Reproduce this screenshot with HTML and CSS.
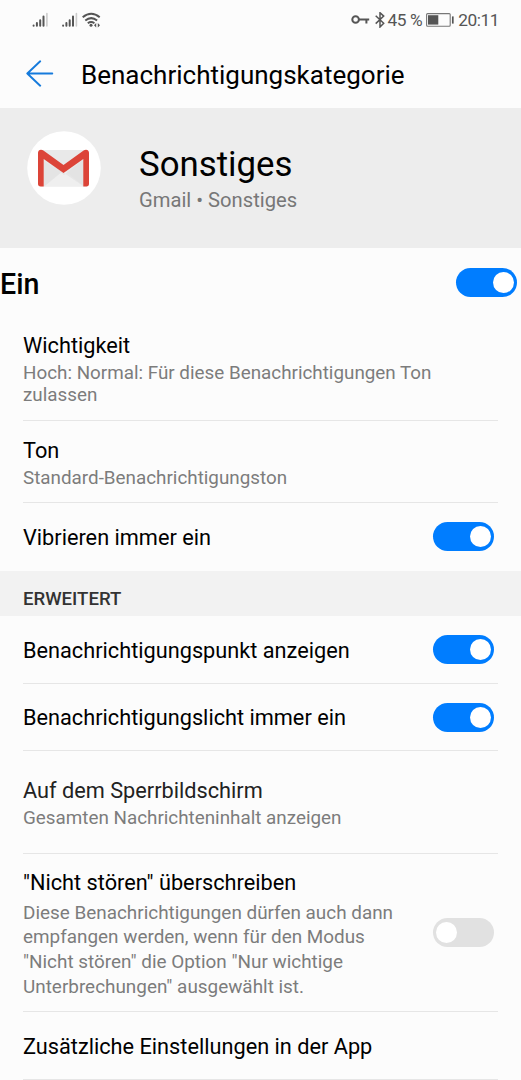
FILE: index.html
```html
<!DOCTYPE html>
<html lang="de">
<head>
<meta charset="utf-8">
<title>Benachrichtigungskategorie</title>
<link rel="stylesheet" href="styles.css">
</head>
<body>
<div class="statusbar">
  <svg class="signals" width="70" height="18" viewBox="0 0 70 18">
    <g stroke="#555" stroke-width="2" stroke-linecap="round"><path d="M2.600 14.400v.4M5.900 12v2.800M9.200 9.200v5.600M12.500 5.600v9.200M32.100 14.400v.4M35.400 12v2.800M38.700 9.200v5.600M42 5.600v9.200"/><path d="M15.900 2.500v12.500M45.400 2.500v12.500" stroke="#ccc" stroke-width="1.600"/></g>
    <g fill="none" stroke="#555" stroke-width="2"><path d="M51.700 6.300q8.500-7 17 0M54.300 9.500q5.900-4.800 11.800 0M56.800 12.200q3.300-2.500 6.600 0"/></g>
    <circle cx="60" cy="14.300" r="1.500" fill="#555"/><path d="M63 14.300l2.200-2.200v4.400zM69 14.300l-2.200-2.200v4.400z" fill="#555"/>
  </svg>
  <div class="status-right">
    <svg width="19" height="12" viewBox="0 0 19 12" fill="none" stroke="#555" stroke-width="2"><circle cx="4.600" cy="5.500" r="3.300"/><path d="M8 5.500h10.200M15.400 5.500v4"/></svg>
    <svg class="bt" width="10" height="16" viewBox="0 0 10 16" fill="none" stroke="#555" stroke-width="1.500"><path d="M.7 3.800l8 7.500L5 15V.7l3.700 3.400-8 7.500"/></svg>
    <span class="percent">45 %</span>
    <svg class="battery" width="28" height="14" viewBox="0 0 28 14"><rect x=".6" y=".6" width="23.600" height="12.600" rx="1" fill="none" stroke="#777" stroke-width="1.100"/><path d="M2 2.200h10.300v9.400H2z" fill="#555"/><path d="M26.800 3.400v7.200" stroke="#555" stroke-width="1.700"/></svg>
    <span class="clock">20:11</span>
  </div>
</div>
<header class="appbar">
  <svg width="28" height="28" viewBox="0 0 28 28" fill="none" stroke="#167bdc" stroke-width="1.900" stroke-linecap="round" stroke-linejoin="round"><path d="M26.300 13.500H1.300M14.200 1.300L1.300 13.500l12.900 12.200"/></svg>
  <h1 class="appbar-title">Benachrichtigungskategorie</h1>
</header>
<section class="hero">
  <svg class="logo" width="74" height="74" viewBox="0 0 74 74">
    <circle cx="37" cy="37" r="36.800" fill="#fff"/>
    <path d="M14 19h46v36.500H14z" fill="#e9e9e9"/>
    <path d="M17 55.500L37 39l20 16.500z" fill="#efefef"/>
    <path d="M17 30v25.500L34 41.500z" fill="#e4e4e4"/>
    <path d="M17 28l20 16 20-16v27.500L37 42z" fill="#dedede" opacity=".5"/>
    <path d="M11 21.700a3.200 3.200 0 0 1 3-2.900q1.300 0 2.400.8L36.500 34l20.100-14.400q1.100-.8 2.400-.8a3.200 3.200 0 0 1 3 2.900v31.100a2.600 2.600 0 0 1-2.600 2.600H56.300V28L36.500 42 16.700 28v27.400h-3.100a2.600 2.600 0 0 1-2.600-2.600z" fill="#dc4438"/>
  </svg>
  <div class="hero-text">
    <h2 class="hero-title">Sonstiges</h2>
    <p class="hero-sub">Gmail • Sonstiges</p>
  </div>
</section>
<section class="master"><span>Ein</span><i class="switch on"></i></section>
<main>
  <div class="row importance"><div><p class="title">Wichtigkeit</p><p class="sub">Hoch: Normal: Für diese Benachrichtigungen Ton<br>zulassen</p></div></div>
  <div class="row sound"><div><p class="title">Ton</p><p class="sub">Standard-Benachrichtigungston</p></div></div>
  <div class="row vibrate"><p class="title">Vibrieren immer ein</p><i class="switch on"></i></div>
  <h3 class="group">ERWEITERT</h3>
  <div class="row dot"><p class="title">Benachrichtigungspunkt anzeigen</p><i class="switch on"></i></div>
  <div class="row light"><p class="title">Benachrichtigungslicht immer ein</p><i class="switch on"></i></div>
  <div class="row lock"><div><p class="title dim">Auf dem Sperrbildschirm</p><p class="sub">Gesamten Nachrichteninhalt anzeigen</p></div></div>
  <div class="row dnd"><div><p class="title">"Nicht stören" überschreiben</p><p class="sub">Diese Benachrichtigungen dürfen auch dann<br>empfangen werden, wenn für den Modus<br>"Nicht stören" die Option "Nur wichtige<br>Unterbrechungen" ausgewählt ist.</p></div><i class="switch"></i></div>
  <div class="row more"><p class="title">Zusätzliche Einstellungen in der App</p></div>
</main>
</body>
</html>
```
FILE: styles.css
```css
* { box-sizing: border-box; }
body { margin: 0; height: 1080px; overflow: hidden; background: #fcfcfc; color: #000; font-family: Roboto, sans-serif; }
h1, h2, h3, p { margin: 0; font-weight: 400; white-space: nowrap; }
svg { display: block; flex: none; }
.statusbar { height: 40px; padding: 0 22px 0 31px; display: flex; align-items: center; justify-content: space-between; color: #555; }
.status-right { display: flex; align-items: center; font-size: 17.300px; }
.percent { letter-spacing: -.4px; }
.clock { letter-spacing: -.45px; }
.bt { margin: 0 2px 0 5px; }
.battery { margin: 0 4px 0 4px; }
.appbar { height: 68px; padding: 0 26px; display: flex; align-items: center; gap: 27px; }
.appbar-title { font-size: 26px; line-height: 32px; padding-top: 2px; }
.hero { height: 140px; padding: 23px 27px 0; display: flex; gap: 38px; background: #ededed; }
.hero-title { font-size: 34.800px; line-height: 40px; padding-top: 13px; }
.hero-sub { font-size: 20.200px; line-height: 24px; margin-top: 4px; color: #777; }
.master { height: 70px; padding: 0 4px 1px 0; display: flex; align-items: center; justify-content: space-between; font-size: 28.600px; font-weight: 500; }
.master span { padding-top: 2px; }
.switch { width: 61px; height: 29px; padding: 4px 3px; display: flex; flex: none; border-radius: 15px; background: #e1e1e1; }
.switch::before { content: ""; width: 21px; height: 21px; border-radius: 50%; background: #fff; }
.switch.on { justify-content: flex-end; background: #007dff; }
.row { margin: 0 23px; padding-right: 4px; display: flex; align-items: center; justify-content: space-between; border-bottom: 1px solid #e6e6e6; }
.title { font-size: 21.730px; line-height: 28px; }
.row > .title { padding-top: 2px; }
.dim { color: #222; }
.sub { font-size: 18.830px; line-height: 22px; margin-top: 2px; color: #7c7c7c; }
.importance { height: 103px; }
.sound { height: 82px; padding-top: 3px; }
.vibrate { height: 68px; padding-bottom: 1px; border-bottom: 0; }
.group { height: 45px; padding: 5px 23px 0; background: #f2f2f2; color: #333; font-size: 18.600px; line-height: 46px; font-weight: 500; }
.dot { height: 68px; }
.light { height: 67px; }
.lock { height: 103px; padding-top: 1px; }
.dnd { height: 158px; }
.dnd > div { padding-top: 3px; }
.dnd .sub { font-size: 18.900px; line-height: 24.600px; margin-top: 4px; }
.more { height: 68px; }
```
